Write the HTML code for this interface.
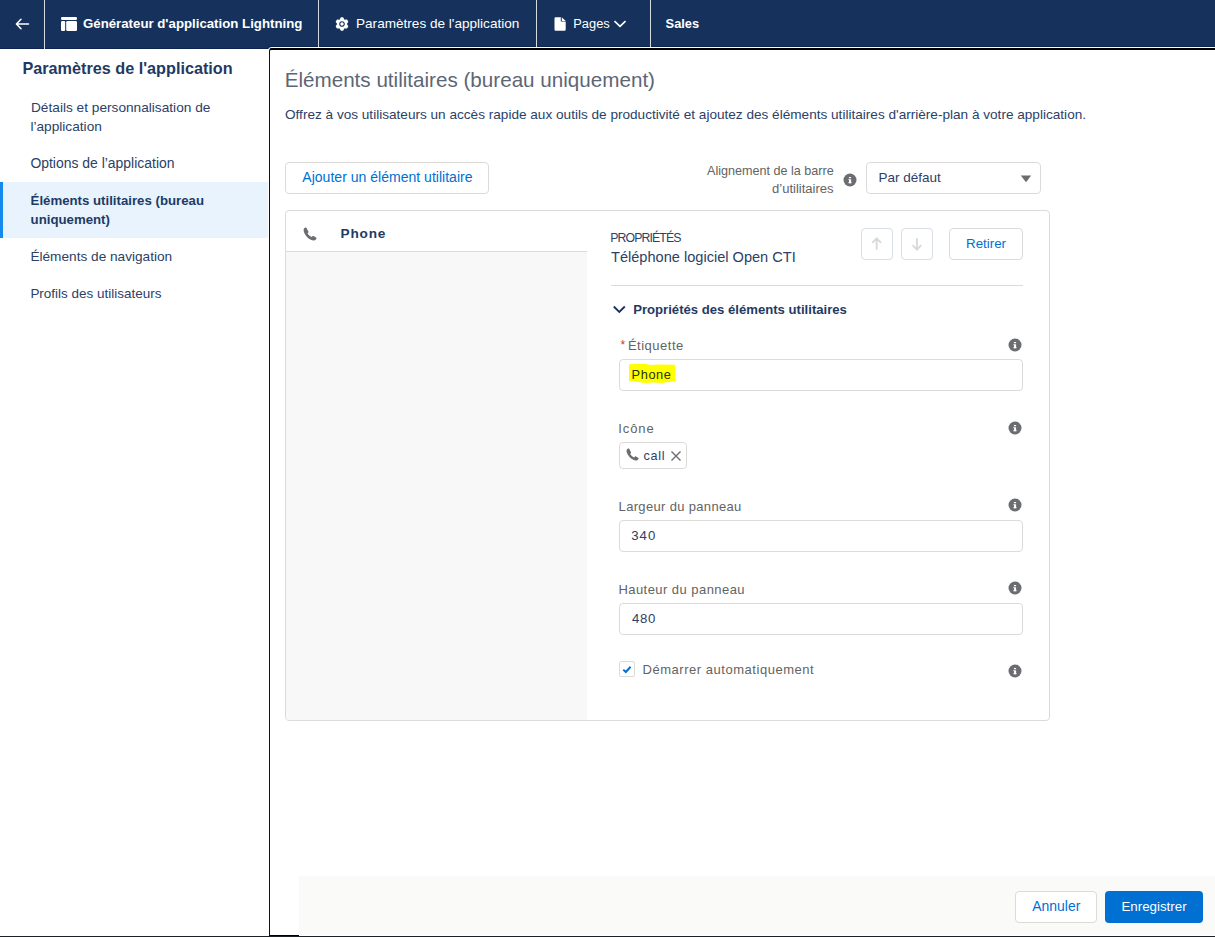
<!DOCTYPE html>
<html><head><meta charset="utf-8">
<style>
html,body{margin:0;padding:0}
body{width:1215px;height:937px;overflow:hidden;position:relative;background:#fff;font-family:"Liberation Sans",sans-serif}
.a{position:absolute;box-sizing:border-box}
.t{position:absolute;white-space:nowrap;line-height:1;font-family:"Liberation Sans",sans-serif}
.sep{position:absolute;top:0;width:1px;height:49px;background:#d4dae3}
.info{position:absolute;width:13px;height:13px}
.inp{position:absolute;box-sizing:border-box;border:1px solid #dddbda;border-radius:4px;background:#fff}
</style></head>
<body>
<!-- top bar -->
<div class="a" style="left:0;top:0;width:1215px;height:49px;background:#16325c"></div>
<div class="a" style="left:0;top:48px;width:268px;height:1px;background:#0b2450"></div>
<div class="a" style="left:268px;top:46px;width:947px;height:1px;background:#0b2450"></div>
<div class="sep" style="left:44px"></div>
<div class="sep" style="left:318px"></div>
<div class="sep" style="left:536px"></div>
<div class="sep" style="left:650px"></div>
<svg class="a" style="left:0;top:0" width="700" height="48" viewBox="0 0 700 48">
 <!-- back arrow -->
 <path d="M16.5 24H28.5M21 19.3L16.4 24L21 28.7" stroke="#fff" stroke-width="1.5" fill="none" stroke-linecap="round" stroke-linejoin="round"/>
 <!-- table icon -->
 <rect x="61" y="17" width="16" height="3" rx="1.2" fill="#fff"/>
 <rect x="61" y="21" width="4.2" height="10" rx="1.2" fill="#fff"/>
 <rect x="66.2" y="21" width="10.8" height="10" rx="1.2" fill="#fff"/>
 <!-- gear -->
 <g transform="translate(342 24)">
  <path d="M-2.05 -3.55L-0.85 -6.04L0.85 -6.04L2.05 -3.55L4.81 -3.76L5.66 -2.29L4.10 0.00L5.66 2.29L4.81 3.76L2.05 3.55L0.85 6.04L-0.85 6.04L-2.05 3.55L-4.81 3.76L-5.66 2.29L-4.10 0.00L-5.66 -2.29L-4.81 -3.76Z" fill="#fff" stroke="#fff" stroke-width="1.3" stroke-linejoin="round"/>
  <circle r="2.25" fill="none" stroke="#16325c" stroke-width="1.2"/>
 </g>
 <!-- page icon -->
 <path d="M555.7 17.3H560.8V21.6H565.7V29.5A1.2 1.2 0 0 1 564.5 30.7H555.7A1.2 1.2 0 0 1 554.5 29.5V18.5A1.2 1.2 0 0 1 555.7 17.3Z" fill="#fff"/>
 <path d="M561.8 17.2L565.7 20.9H561.8Z" fill="#fff"/>
 <!-- chevron -->
 <path d="M614.5 21.2L620 26.4L625.5 21.2" stroke="#fff" stroke-width="1.6" fill="none"/>
</svg>

<!-- sidebar active -->
<div class="a" style="left:0;top:182px;width:268px;height:56px;background:#e8f3fd"></div>
<div class="a" style="left:0;top:182px;width:3px;height:56px;background:#1589ee"></div>

<!-- panel annotation border -->
<div class="a" style="left:269px;top:48px;width:950px;height:900px;border-left:1px solid #111;border-top:2px solid #000;border-radius:3px 0 0 0;box-shadow:0 0 0 1px #fff"></div>

<!-- add button -->
<div class="inp" style="left:285px;top:162px;width:204px;height:32px"></div>
<!-- select -->
<div class="inp" style="left:866px;top:162px;width:175px;height:32px"></div>
<svg class="a" style="left:1019px;top:173px" width="14" height="12"><path d="M1.8 2.6H12.2L7 9.2Z" fill="#6b6d70"/></svg>

<!-- card -->
<div class="a" style="left:285px;top:210px;width:765px;height:511px;border:1px solid #d9dbdf;border-radius:4px"></div>
<div class="a" style="left:286px;top:252px;width:301px;height:468px;background:#f8f8f8;border-radius:0 0 0 3px"></div>
<div class="a" style="left:286px;top:251px;width:301px;height:1px;background:#d9dbdf"></div>

<!-- move buttons -->
<div class="a" style="left:861px;top:228px;width:32px;height:32px;border:1px solid #d8dde6;border-radius:4px"></div>
<div class="a" style="left:901px;top:228px;width:32px;height:32px;border:1px solid #d8dde6;border-radius:4px"></div>
<svg class="a" style="left:861px;top:228px" width="72" height="32">
 <path d="M15.7 21.8V11M11.3 14.8L15.7 10.4L20.1 14.8" stroke="#d9d9d9" stroke-width="1.9" fill="none"/>
 <path d="M55.9 10.2V21M51.5 17.2L55.9 21.6L60.3 17.2" stroke="#d9d9d9" stroke-width="1.9" fill="none"/>
</svg>
<div class="inp" style="left:949px;top:228px;width:74px;height:32px"></div>
<div class="a" style="left:611px;top:285px;width:412px;height:1px;background:#dddbda"></div>
<svg class="a" style="left:610px;top:302px" width="18" height="14"><path d="M3.8 4.5L9.3 10L14.8 4.5" stroke="#16325c" stroke-width="1.8" fill="none"/></svg>
<div class="t" style="left:620.5px;top:339px;font-size:12px;color:#c23934">*</div>

<!-- inputs -->
<div class="inp" style="left:619px;top:359px;width:404px;height:32px"></div>
<div class="inp" style="left:619px;top:520px;width:404px;height:32px"></div>
<div class="inp" style="left:619px;top:603px;width:404px;height:32px"></div>
<!-- highlight -->
<svg class="a" style="left:626px;top:362px" width="54" height="24"><path d="M3 2.2L18 1.8L25 3L33 2.5L49 2.8L49.5 19L43 20L36 21L27 20.5L19 21L9 19.5L3 19Z" fill="#ffff00"/></svg>

<!-- pill -->
<div class="inp" style="left:619px;top:442px;width:68px;height:27px"></div>
<svg class="a" style="left:0;top:0" width="1215" height="937">
 <!-- X -->
 <path d="M671.5 451.5L680.5 460.5M680.5 451.5L671.5 460.5" stroke="#6b6d70" stroke-width="1.4"/>
</svg>

<!-- checkbox -->
<div class="a" style="left:619px;top:661px;width:16px;height:16px;border:1px solid #dddbda;border-radius:2px;background:#fff"></div>
<svg class="a" style="left:619px;top:661px" width="16" height="16"><path d="M4.3 8.6L6.8 11L11.6 5.8" stroke="#0070d2" stroke-width="2" fill="none"/></svg>

<!-- phone icons -->
<svg class="a" style="left:302px;top:226px" width="16" height="16" viewBox="0 0 16 16"><path id="ph" d="M3.2 1.6C2.3 2.1 1.6 3 1.6 4.1C1.7 6.3 3 8.8 5 10.9C7.1 12.9 9.6 14.3 11.9 14.4C13 14.4 13.9 13.7 14.4 12.8L14.5 12.2C14.5 11.9 14.3 11.6 14 11.4L11.6 10.1C11.2 9.9 10.7 10 10.4 10.3L9.7 11.1C8.5 10.6 6.9 9.5 5.5 7.5L6.2 6.7C6.5 6.4 6.6 5.9 6.4 5.5L5 3C4.8 2 4 1.4 3.2 1.6Z" fill="#6b6d70"/></svg>
<svg class="a" style="left:625px;top:447px" width="15" height="15" viewBox="0 0 16 16"><path d="M3.2 1.6C2.3 2.1 1.6 3 1.6 4.1C1.7 6.3 3 8.8 5 10.9C7.1 12.9 9.6 14.3 11.9 14.4C13 14.4 13.9 13.7 14.4 12.8L14.5 12.2C14.5 11.9 14.3 11.6 14 11.4L11.6 10.1C11.2 9.9 10.7 10 10.4 10.3L9.7 11.1C8.5 10.6 6.9 9.5 5.5 7.5L6.2 6.7C6.5 6.4 6.6 5.9 6.4 5.5L5 3C4.8 2 4 1.4 3.2 1.6Z" fill="#6b6d70"/></svg>

<!-- info icons -->
<svg class="a" style="left:0;top:0" width="1215" height="937">
 <defs><g id="inf"><circle r="6.5" fill="#6b6d70"/><rect x="-1" y="-0.7" width="2.1" height="3.9" fill="#fff"/><rect x="-1.7" y="2.3" width="3.3" height="0.9" fill="#fff"/><rect x="-1.7" y="-0.7" width="0.9" height="0.8" fill="#fff"/><rect x="-1.1" y="-3.0" width="2.2" height="1.3" rx="0.3" fill="#fff"/></g></defs>
 <use href="#inf" x="850" y="180"/>
 <use href="#inf" x="1015" y="345"/>
 <use href="#inf" x="1015" y="428"/>
 <use href="#inf" x="1015" y="505"/>
 <use href="#inf" x="1015" y="588"/>
 <use href="#inf" x="1015" y="671"/>
</svg>

<!-- footer -->
<div class="a" style="left:299px;top:876px;width:916px;height:59px;background:#fafaf9"></div>
<div class="a" style="left:269px;top:935px;width:30px;height:1px;background:#000"></div>
<div class="a" style="left:0;top:936px;width:1215px;height:1px;background:#1c2029"></div>
<div class="inp" style="left:1015px;top:891px;width:82px;height:32px"></div>
<div class="a" style="left:1105px;top:891px;width:98px;height:32px;background:#0070d2;border-radius:4px"></div>

<div class="t" style="left:83px;top:17px;font-size:13.24px;color:#fff;font-weight:700">Générateur d&#39;application Lightning</div>
<div class="t" style="left:356px;top:17px;font-size:13.58px;color:#fff">Paramètres de l&#39;application</div>
<div class="t" style="left:573.3px;top:18px;font-size:12.85px;color:#fff">Pages</div>
<div class="t" style="left:665.6px;top:18px;font-size:12.84px;color:#fff;font-weight:700">Sales</div>
<div class="t" style="left:22.4px;top:60px;font-size:16.23px;color:#1f3a64;font-weight:700">Paramètres de l&#39;application</div>
<div class="t" style="left:31px;top:101px;font-size:13.68px;color:#2b4167">Détails et personnalisation de</div>
<div class="t" style="left:30.4px;top:120px;font-size:13.68px;color:#2b4167">l’application</div>
<div class="t" style="left:30.4px;top:157px;font-size:13.95px;color:#2b4167">Options de l’application</div>
<div class="t" style="left:30.6px;top:194px;font-size:13.23px;color:#1f3a64;font-weight:700">Éléments utilitaires (bureau</div>
<div class="t" style="left:30.6px;top:213px;font-size:13.23px;color:#1f3a64;font-weight:700">uniquement)</div>
<div class="t" style="left:30.4px;top:250px;font-size:13.65px;color:#2b4167">Éléments de navigation</div>
<div class="t" style="left:30.4px;top:287px;font-size:13.48px;color:#2b4167">Profils des utilisateurs</div>
<div class="t" style="left:284.7px;top:70px;font-size:20.64px;color:#5d6675">Éléments utilitaires (bureau uniquement)</div>
<div class="t" style="left:285px;top:108px;font-size:13.6px;color:#2b4167">Offrez à vos utilisateurs un accès rapide aux outils de productivité et ajoutez des éléments utilitaires d&#39;arrière-plan à votre application.</div>
<div class="t" style="left:302.3px;top:170px;font-size:14.06px;color:#0070d2">Ajouter un élément utilitaire</div>
<div class="t" style="left:707px;top:165px;font-size:12.6px;color:#636363">Alignement de la barre</div>
<div class="t" style="left:772px;top:182px;font-size:13.05px;color:#636363">d’utilitaires</div>
<div class="t" style="left:878.4px;top:171px;font-size:13.51px;color:#2b4167">Par défaut</div>
<div class="t" style="left:340.6px;top:227px;font-size:13.63px;color:#1f3a64;font-weight:700;letter-spacing:0.8px">Phone</div>
<div class="t" style="left:610.2px;top:232px;font-size:12.3px;color:#2b4167;letter-spacing:-0.89px">PROPRIÉTÉS</div>
<div class="t" style="left:611px;top:250px;font-size:14.58px;color:#2b4167">Téléphone logiciel Open CTI</div>
<div class="t" style="left:966px;top:237px;font-size:13.34px;color:#0070d2">Retirer</div>
<div class="t" style="left:633.2px;top:303px;font-size:13.14px;color:#1f3a64;font-weight:700">Propriétés des éléments utilitaires</div>
<div class="t" style="left:627.9px;top:339px;font-size:13px;color:#636363;letter-spacing:0.51px">Étiquette</div>
<div class="t" style="left:631.6px;top:369px;font-size:12.8px;color:#243208;letter-spacing:0.57px">Phone</div>
<div class="t" style="left:618.3px;top:422px;font-size:13px;color:#636363;letter-spacing:0.88px">Icône</div>
<div class="t" style="left:643.4px;top:450px;font-size:12.6px;color:#2b4167;letter-spacing:0.77px">call</div>
<div class="t" style="left:618.6px;top:500px;font-size:13px;color:#636363;letter-spacing:0.33px">Largeur du panneau</div>
<div class="t" style="left:631.2px;top:529px;font-size:13.2px;color:#2b4167;letter-spacing:1.1px">340</div>
<div class="t" style="left:618.4px;top:583px;font-size:13px;color:#636363;letter-spacing:0.45px">Hauteur du panneau</div>
<div class="t" style="left:632px;top:612px;font-size:13.2px;color:#2b4167;letter-spacing:0.65px">480</div>
<div class="t" style="left:642.5px;top:663px;font-size:13px;color:#636363;letter-spacing:0.53px">Démarrer automatiquement</div>
<div class="t" style="left:1032.2px;top:899px;font-size:13.98px;color:#0070d2">Annuler</div>
<div class="t" style="left:1121.4px;top:900px;font-size:13.34px;color:#fff">Enregistrer</div>
</body></html>
